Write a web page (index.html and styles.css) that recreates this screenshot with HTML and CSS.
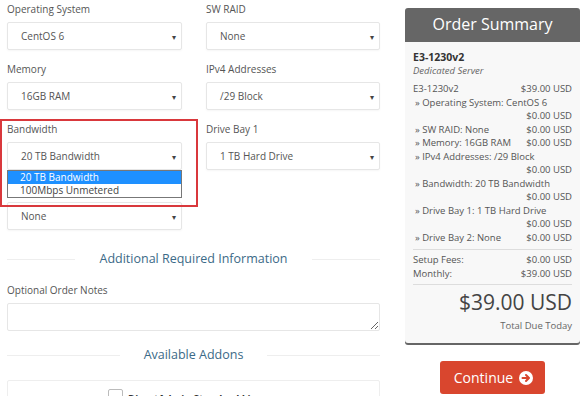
FILE: index.html
```html
<!DOCTYPE html>
<html lang="en">
<head>
    <meta charset="UTF-8">
    <title>Configure Server</title>
    <link rel="stylesheet" href="styles.css">
</head>
<body>
    <div class="page">
        <div class="main">
            <div class="options">
                <div class="field">
                    <div class="label">Operating System</div>
                    <div class="select">CentOS 6<span class="caret">&#9662;</span></div>
                </div>
                <div class="field">
                    <div class="label">SW RAID</div>
                    <div class="select">None<span class="caret">&#9662;</span></div>
                </div>
                <div class="field">
                    <div class="label">Memory</div>
                    <div class="select">16GB RAM<span class="caret">&#9662;</span></div>
                </div>
                <div class="field">
                    <div class="label">IPv4 Addresses</div>
                    <div class="select">/29 Block<span class="caret">&#9662;</span></div>
                </div>
                <div class="field open">
                    <div class="label">Bandwidth</div>
                    <div class="select">20 TB Bandwidth<span class="caret">&#9662;</span></div>
                    <ul class="dropdown">
                        <li class="active">20 TB Bandwidth</li>
                        <li>100Mbps Unmetered</li>
                    </ul>
                    <div class="highlight"></div>
                </div>
                <div class="field">
                    <div class="label">Drive Bay 1</div>
                    <div class="select">1 TB Hard Drive<span class="caret">&#9662;</span></div>
                </div>
                <div class="field">
                    <div class="label">Drive Bay 2</div>
                    <div class="select">None<span class="caret">&#9662;</span></div>
                </div>
            </div>

            <div class="sub-heading"><span>Additional Required Information</span></div>

            <div class="label">Optional Order Notes</div>
            <textarea class="notes"></textarea>

            <div class="sub-heading addons-heading"><span>Available Addons</span></div>

            <div class="addon">
                <span class="check"></span>
                <strong>DirectAdmin Standard License</strong>
            </div>
        </div>

        <div class="sidebar">
            <div class="summary">
                <div class="summary-title">Order Summary</div>
                <div class="summary-body">
                    <div class="product">E3-1230v2</div>
                    <div class="group">Dedicated Server</div>
                    <div class="lines">
                        <div class="line"><span>E3-1230v2</span><span>$39.00 USD</span></div>
                        <div class="line sub"><span>&raquo; Operating System: CentOS 6</span></div>
                        <div class="line price">$0.00 USD</div>
                        <div class="line sub"><span>&raquo; SW RAID: None</span><span>$0.00 USD</span></div>
                        <div class="line sub"><span>&raquo; Memory: 16GB RAM</span><span>$0.00 USD</span></div>
                        <div class="line sub"><span>&raquo; IPv4 Addresses: /29 Block</span></div>
                        <div class="line price">$0.00 USD</div>
                        <div class="line sub"><span>&raquo; Bandwidth: 20 TB Bandwidth</span></div>
                        <div class="line price">$0.00 USD</div>
                        <div class="line sub"><span>&raquo; Drive Bay 1: 1 TB Hard Drive</span></div>
                        <div class="line price">$0.00 USD</div>
                        <div class="line sub"><span>&raquo; Drive Bay 2: None</span><span>$0.00 USD</span></div>
                    </div>
                    <div class="lines totals">
                        <div class="line"><span>Setup Fees:</span><span>$0.00 USD</span></div>
                        <div class="line"><span>Monthly:</span><span>$39.00 USD</span></div>
                    </div>
                    <div class="total">
                        <div class="amount">$39.00 USD</div>
                        <div class="due">Total Due Today</div>
                    </div>
                </div>
            </div>
            <div class="actions">
                <button class="continue">Continue
                    <svg width="14" height="14" viewBox="0 0 14 14">
                        <circle cx="7" cy="7" r="7" fill="#fff"/>
                        <path d="M3.5 7h6M7 4l3 3-3 3" stroke="#d9462e" stroke-width="2" fill="none" stroke-linecap="round" stroke-linejoin="round"/>
                    </svg>
                </button>
            </div>
        </div>
    </div>
</body>
</html>
```

FILE: styles.css
```css
body {
    margin: 0;
    font-family: "Open Sans", Arial, sans-serif;
    color: #555;
    background: #fff;
    overflow: hidden;
}
.page {
    display: flex;
    height: 396px;
    overflow: hidden;
}
.main {
    width: 373px;
    padding-left: 7px;
    padding-top: 2px;
}
.options {
    display: grid;
    grid-template-columns: 175px 174px;
    column-gap: 24px;
}
.field {
    position: relative;
    margin-bottom: 12px;
}
.label {
    font-size: 10px;
    line-height: 15px;
    margin-bottom: 5px;
    color: #555;
}
.select {
    position: relative;
    height: 28px;
    line-height: 27px;
    box-sizing: border-box;
    padding-left: 13px;
    font-size: 10px;
    color: #555;
    border: 1px solid #e6e6e6;
    border-radius: 2px;
    box-shadow: 0 1px 2px rgba(0, 0, 0, 0.04);
}
.caret {
    position: absolute;
    right: 5px;
    top: 0;
    font-size: 8px;
    color: #444;
}
.dropdown {
    position: absolute;
    left: 0;
    top: 48px;
    width: 175px;
    box-sizing: border-box;
    margin: 0;
    padding: 0;
    list-style: none;
    background: #fff;
    border: 1px solid #777;
    font-size: 10px;
    line-height: 13px;
    z-index: 2;
}
.dropdown li {
    padding-left: 12px;
    color: #444;
}
.dropdown li.active {
    background: #1e90ff;
    color: #fff;
}
.highlight {
    position: absolute;
    left: -7px;
    top: -3px;
    width: 198px;
    height: 88px;
    box-sizing: border-box;
    border: 2px solid #d9383c;
    z-index: 3;
}
.sub-heading {
    display: flex;
    align-items: center;
    gap: 12px;
    margin-top: 7px;
    margin-bottom: 14px;
    font-size: 12.5px;
    line-height: 20px;
    color: #3b6a87;
}
.sub-heading::before,
.sub-heading::after {
    content: "";
    flex: 1;
    height: 1px;
    background: #eee;
}
.sub-heading span {
    padding: 0 12px;
}
.notes {
    display: block;
    width: 373px;
    height: 28px;
    box-sizing: border-box;
    margin: 0;
    border: 1px solid #e6e6e6;
    border-radius: 2px;
    resize: vertical;
}
.addons-heading {
    margin-top: 14px;
    margin-bottom: 15px;
}
.addon {
    display: flex;
    align-items: flex-start;
    justify-content: center;
    gap: 5px;
    height: 40px;
    padding-top: 8px;
    box-sizing: border-box;
    border: 1px solid #eee;
    border-radius: 2px;
    font-size: 10px;
    color: #333;
}
.check {
    width: 13px;
    height: 13px;
    border: 1px solid #bbb;
    border-radius: 2px;
    background: #fff;
}
.addon strong {
    margin-top: 3px;
}
.sidebar {
    width: 175px;
    margin-left: 25px;
    padding-top: 8px;
}
.summary {
    background: #f8f8f8;
    border-radius: 3px;
    box-shadow: 0 2px 0 #666;
}
.summary-title {
    height: 34px;
    line-height: 33px;
    background: #666;
    color: #fff;
    text-align: center;
    font-size: 16px;
    border-radius: 3px 3px 0 0;
}
.summary-body {
    padding: 8px 8px 10px 8px;
    font-size: 9.5px;
    color: #555;
}
.product {
    font-weight: bold;
    font-size: 10.5px;
    line-height: 14px;
    color: #333;
}
.group {
    font-style: italic;
    font-size: 9.5px;
    line-height: 14px;
    color: #666;
    margin-bottom: 4px;
}
.lines {
    padding-bottom: 4.5px;
    border-bottom: 1px solid #ddd;
}
.line {
    display: flex;
    justify-content: space-between;
    line-height: 13.5px;
}
.line.sub span:first-child {
    padding-left: 2px;
}
.line.price {
    justify-content: flex-end;
}
.totals {
    padding-top: 3.5px;
    padding-bottom: 4px;
}
.total {
    text-align: right;
    padding-top: 3px;
}
.amount {
    font-size: 21px;
    line-height: 28px;
    color: #444;
}
.due {
    margin-top: 3px;
    font-size: 9.5px;
    line-height: 14px;
    color: #666;
}
.actions {
    text-align: center;
    padding-top: 18px;
}
.continue {
    display: inline-flex;
    align-items: center;
    gap: 6px;
    height: 33px;
    padding: 0 12px 0 14px;
    border: none;
    border-radius: 3px;
    background: #d9462e;
    color: #fff;
    font-family: "Open Sans", Arial, sans-serif;
    font-size: 14px;
}
```
